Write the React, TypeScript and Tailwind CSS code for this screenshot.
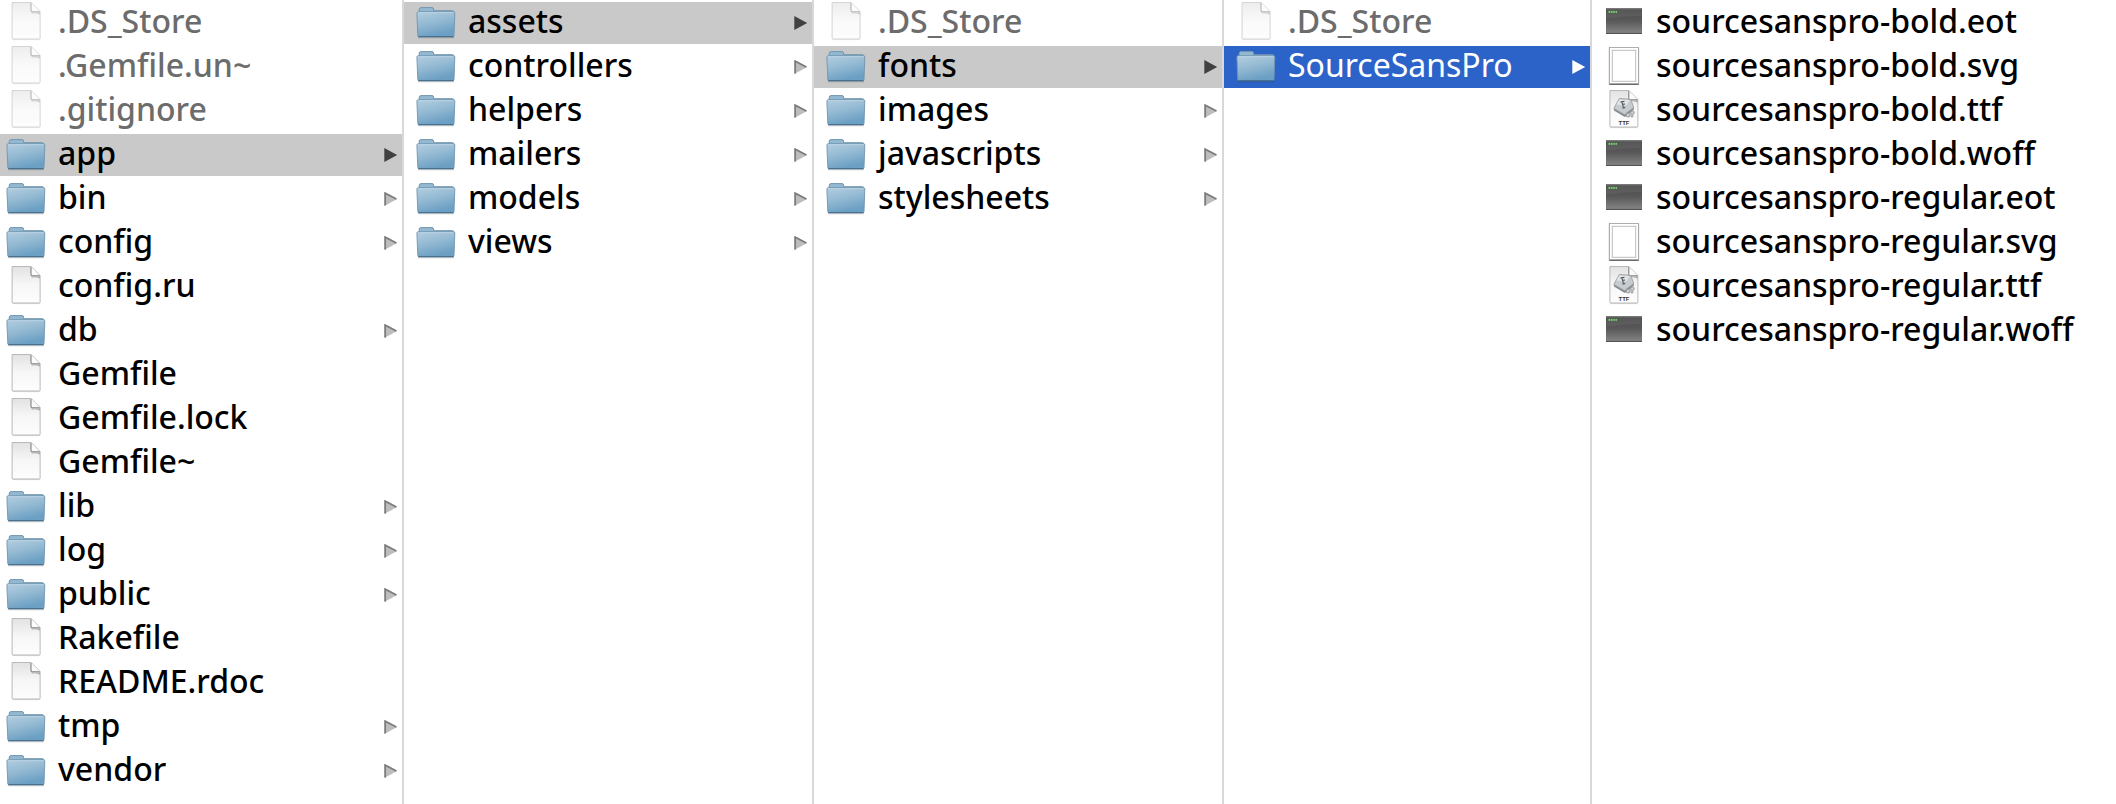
import { useId } from "react";
import clsx from "clsx";

type Kind = "folder" | "file" | "terminal" | "vector" | "ttf";
type Entry = { name: string; kind: Kind; hidden?: boolean; state?: "path" | "active" };

const folder = (name: string, state?: Entry["state"]): Entry => ({ name, kind: "folder", state });
const file = (name: string, kind: Kind = "file"): Entry => ({ name, kind });
const hidden = (name: string): Entry => ({ name, kind: "file", hidden: true });

const columns: { label: string; entries: Entry[] }[] = [
  {
    label: "Project",
    entries: [
      hidden(".DS_Store"),
      hidden(".Gemfile.un~"),
      hidden(".gitignore"),
      folder("app", "path"),
      folder("bin"),
      folder("config"),
      file("config.ru"),
      folder("db"),
      file("Gemfile"),
      file("Gemfile.lock"),
      file("Gemfile~"),
      folder("lib"),
      folder("log"),
      folder("public"),
      file("Rakefile"),
      file("README.rdoc"),
      folder("tmp"),
      folder("vendor"),
    ],
  },
  {
    label: "app",
    entries: [
      folder("assets", "path"),
      folder("controllers"),
      folder("helpers"),
      folder("mailers"),
      folder("models"),
      folder("views"),
    ],
  },
  {
    label: "assets",
    entries: [
      hidden(".DS_Store"),
      folder("fonts", "path"),
      folder("images"),
      folder("javascripts"),
      folder("stylesheets"),
    ],
  },
  {
    label: "fonts",
    entries: [hidden(".DS_Store"), folder("SourceSansPro", "active")],
  },
  {
    label: "SourceSansPro",
    entries: [
      file("sourcesanspro-bold.eot", "terminal"),
      file("sourcesanspro-bold.svg", "vector"),
      file("sourcesanspro-bold.ttf", "ttf"),
      file("sourcesanspro-bold.woff", "terminal"),
      file("sourcesanspro-regular.eot", "terminal"),
      file("sourcesanspro-regular.svg", "vector"),
      file("sourcesanspro-regular.ttf", "ttf"),
      file("sourcesanspro-regular.woff", "terminal"),
    ],
  },
];

function Gradient({ id, stops, slant }: { id: string; stops: string[]; slant?: boolean }) {
  return (
    <linearGradient id={id} x1="0" y1="0" x2={slant ? "0.35" : "0"} y2="1">
      {stops.map((color, i) => (
        <stop key={i} offset={i / (stops.length - 1)} stopColor={color} />
      ))}
    </linearGradient>
  );
}

function FolderArt({ id }: { id: string }) {
  return (
    <>
      <defs>
        <Gradient id={id} slant stops={["#b4cee0", "#94bad3", "#6b9fc3"]} />
      </defs>
      <path d="M2 35.5h36" stroke="#000" strokeOpacity="0.22" strokeWidth="1.4" />
      <path
        d="M3.2 12V7.2Q3.4 5.6 5 5.6H16Q17.4 5.6 17.6 7V8.7H36.6Q37.8 8.7 37.8 10V12Z"
        fill="#93b9d2"
        stroke="#7396ae"
        strokeWidth="1"
      />
      <path
        d="M0.9 11.2Q0.8 9.7 2.4 9.7H37.2Q38.9 9.7 38.8 11.2L38 33.6Q37.9 34.8 36.8 34.8H3Q1.9 34.8 1.8 33.6Z"
        fill={`url(#${id})`}
        stroke="#6f95ae"
        strokeWidth="0.9"
      />
      <path d="M2 10.7H37.6" stroke="#c0d7e5" strokeWidth="0.9" />
      <path d="M2.4 34.5H37.4" stroke="#47708e" strokeWidth="1.1" />
    </>
  );
}

function PageArt({ id, left = 5.6 }: { id: string; left?: number }) {
  return (
    <g transform={`translate(${left} 0)`}>
      <defs>
        <Gradient id={id} stops={["#e2e2e2", "#f7f7f7", "#fdfdfd"]} />
      </defs>
      <path d="M1 37.6H28" stroke="#000" strokeOpacity="0.16" />
      <path
        d="M0.5 0.5H19.5L28.5 9.5V36.2Q28.5 37 27.7 37H1.3Q0.5 37 0.5 36.2Z"
        fill={`url(#${id})`}
        stroke="#b9b9b9"
      />
      <path d="M19.6 10.4H28.2V12.6Q25 10.8 20.4 11.4Z" fill="#6e6e6e" fillOpacity="0.55" />
      <path d="M19.5 0.8V9.7H28.2Z" fill="#fbfbfb" />
      <path d="M19.4 1V8.4Q19.4 9.8 20.8 9.8H28.2" fill="none" stroke="#828282" strokeWidth="1.1" />
    </g>
  );
}

function TerminalArt({ id }: { id: string }) {
  return (
    <>
      <defs>
        <Gradient id={id} stops={["#4b4b4b", "#595959", "#868686"]} />
      </defs>
      <rect x="2" y="6.3" width="36" height="25.4" fill={`url(#${id})`} />
      <path d="M2.5 7H37.5V14Q20 13.4 2.5 16.5Z" fill="#fff" fillOpacity="0.06" />
      <path d="M2 6.8H38" stroke="#777" />
      <path d="M2 31.4H38" stroke="#4c4c4c" />
      <path d="M4.4 9.9H13" stroke="#4f8a49" strokeWidth="2.2" />
      <path d="M4.6 9.9H13" stroke="#86c97c" strokeWidth="1.6" strokeDasharray="1.4 1" />
    </>
  );
}

function VectorArt() {
  return (
    <>
      <rect x="4.4" y="1.4" width="31" height="37.6" rx="1" fill="#000" fillOpacity="0.12" />
      <path d="M5.3 38.3H34.7" stroke="#444" strokeOpacity="0.75" strokeWidth="1.4" />
      <rect x="5.4" y="1.5" width="29" height="36" fill="#fff" stroke="#9c9c9c" strokeWidth="0.8" />
      <rect x="8.3" y="4.3" width="23.4" height="31" fill="#fff" stroke="#bdbdbd" strokeWidth="1" />
    </>
  );
}

function TtfArt({ id }: { id: string }) {
  return (
    <>
      <PageArt id={id} left={5.4} />
      <path d="M9.8 18.2L20.6 24.4L29.6 17.2L30 19.2L20.8 27L10 20.6Z" fill="#85898c" />
      <path d="M15.4 8.4L26.6 9.4L29.8 17.4L20.6 24.6L9.8 18.4Z" fill="#c6cbcf" stroke="#999ea2" strokeWidth="0.9" />
      <path d="M15.6 9.2L26 10.2L22 15.4L12.4 14.6Z" fill="#e0e4e7" />
      <path d="M17.6 11.2L19.6 17.8M16.4 12L20.4 11.4M18.4 14.4L21 14M18.4 18.2L21.2 17.4" stroke="#55595c" strokeWidth="1.1" />
      <circle cx="24" cy="25" r="2" fill="#d2d2d2" stroke="#8b8b8b" strokeWidth="0.9" />
      <circle cx="28.4" cy="22.6" r="1.8" fill="#d2d2d2" stroke="#8b8b8b" strokeWidth="0.9" />
      <circle cx="28" cy="26" r="1.2" fill="#d2d2d2" stroke="#9b9b9b" strokeWidth="0.8" />
      <text
        x="20"
        y="35.4"
        textAnchor="middle"
        fontFamily="Liberation Sans, sans-serif"
        fontSize="6"
        fontWeight="700"
        fill="#3c3c3c"
      >
        TTF
      </text>
    </>
  );
}

function EntryIcon({ kind, dimmed }: { kind: Kind; dimmed?: boolean }) {
  const id = useId();
  return (
    <svg viewBox="0 0 40 42" aria-hidden="true" className={clsx("h-[42px] w-10 shrink-0", dimmed && "opacity-60")}>
      {kind === "folder" && <FolderArt id={id} />}
      {kind === "file" && <PageArt id={id} />}
      {kind === "terminal" && <TerminalArt id={id} />}
      {kind === "vector" && <VectorArt />}
      {kind === "ttf" && <TtfArt id={id} />}
    </svg>
  );
}

function Disclosure({ state }: { state: Entry["state"] }) {
  return (
    <svg viewBox="0 0 14 42" aria-hidden="true" className="h-[42px] w-3.5 shrink-0">
      {state ? (
        <path d="M0.3 14L13.2 21L0.3 28Z" fill={state === "active" ? "#fff" : "#404040"} />
      ) : (
        <>
          <path d="M0.3 14L13.2 21L0.3 28Z" fill="#bdbdbd" />
          <path d="M1.2 27.4V15.2L12.4 21" fill="none" stroke="#7c7c7c" strokeWidth="1.7" />
        </>
      )}
    </svg>
  );
}

function Row({ entry, first }: { entry: Entry; first: boolean }) {
  const { name, kind, state } = entry;
  return (
    <li>
      <button
        type="button"
        aria-current={state ? "true" : undefined}
        className={clsx(
          "flex h-[42px] w-full items-start pr-1 text-left",
          first ? "pl-1.5" : "pl-3",
          state === "path" && "bg-[#c9c9c9]",
          state === "active" && "bg-[#2c63c9]",
        )}
      >
        <EntryIcon kind={kind} dimmed={entry.hidden} />
        <span
          className={clsx(
            "ml-3 grow text-[32px] leading-[38px] whitespace-nowrap",
            state === "active" ? "font-normal text-white" : "font-medium",
            entry.hidden && "text-[#6c6c6c]",
            !entry.hidden && state !== "active" && "text-black",
          )}
        >
          {name}
        </span>
        {kind === "folder" && <Disclosure state={state} />}
      </button>
    </li>
  );
}

export default function App() {
  return (
    <main className="grid min-h-screen grid-cols-[404fr_410fr_410fr_368fr_524fr] bg-white font-['Noto_Sans',sans-serif]">
      {columns.map((column, i) => (
        <ul
          key={column.label}
          aria-label={column.label}
          className={clsx(
            "flex min-w-0 flex-col gap-0.5 pt-0.5",
            i < columns.length - 1 && "border-r-2 border-[#d8d8d8]",
          )}
        >
          {column.entries.map((entry) => (
            <Row key={entry.name} entry={entry} first={i === 0} />
          ))}
        </ul>
      ))}
    </main>
  );
}
